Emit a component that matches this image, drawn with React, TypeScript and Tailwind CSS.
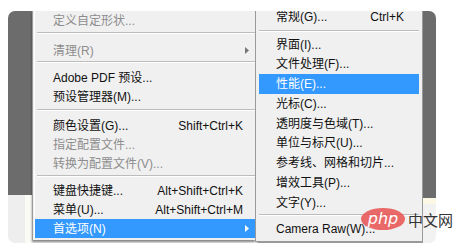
import React from "react";

const FONT = { fontFamily: '"Liberation Sans", "Noto Sans CJK SC", sans-serif' };

function Arrow({ color }: { color: string }) {
  return (
    <svg width="4" height="7" viewBox="0 0 4 7" className="shrink-0">
      <polygon points="0,0 4,3.5 0,7" fill={color} />
    </svg>
  );
}

function LRow({
  label,
  shortcut,
  disabled,
  active,
  arrow,
}: {
  label: string;
  shortcut?: string;
  disabled?: boolean;
  active?: boolean;
  arrow?: boolean;
}) {
  const color = active ? "text-white" : disabled ? "text-[#8d8d8d]" : "text-[#111]";
  return (
    <div
      className={`flex h-[19px] items-center pl-[18px] pr-[12px] text-[12px] leading-none ${color} ${
        active ? "bg-[#3399ff]" : ""
      }`}
    >
      <span className="flex-1 whitespace-nowrap">{label}</span>
      {shortcut && <span className="whitespace-nowrap">{shortcut}</span>}
      {arrow && (
        <span className="mr-[-6px]">
          <Arrow color={active ? "#ffffff" : "#777777"} />
        </span>
      )}
    </div>
  );
}

function RRow({ label, shortcut, active }: { label: string; shortcut?: string; active?: boolean }) {
  return (
    <div
      className={`mx-[3px] flex h-[19.75px] items-center pl-[17px] pr-[15px] text-[12px] leading-none ${
        active ? "bg-[#3399ff] text-white" : "text-[#111]"
      }`}
    >
      <span className="flex-1 whitespace-nowrap">{label}</span>
      {shortcut && <span className="whitespace-nowrap">{shortcut}</span>}
    </div>
  );
}

function Sep({ h, top, inset }: { h: string; top: string; inset: string }) {
  return (
    <div className={`${h} ${inset}`}>
      <div className={`${top} h-px bg-[#bcbcbc]`} />
      <div className="h-px bg-white" />
    </div>
  );
}

export default function App() {
  return (
    <div className="relative h-[251px] w-[460px] overflow-hidden bg-white" style={FONT}>
      <div className="pl-[8px] pt-[11px]">
        <div className="flex h-[232px] w-[428px] overflow-hidden rounded-[7px]">
          {/* left app strip */}
          <div className="flex w-[24px] flex-col">
            <div className="h-[184px] bg-[#6c6c6c]" />
            <div className="flex flex-1">
              <div className="flex-1 bg-[#eeeeee]" />
              <div className="w-[7px] bg-[#fbfbf6]" />
            </div>
          </div>

          {/* left menu */}
          <div className="flex w-[223px] flex-col bg-[#f4f4f4]">
            <div className="flex h-[229px] flex-col border-l border-[#9a9a9a] bg-[#f0f0f0] pl-[1px] shadow-[0_2px_2px_rgba(0,0,0,0.45)]">
              <div className="flex flex-1 flex-col border-l border-white">
                <LRow label="定义自定形状..." disabled />
                <Sep h="h-[11px]" top="mt-[2px]" inset="ml-[2px]" />
                <LRow label="清理(R)" disabled arrow />
                <Sep h="h-[8px]" top="mt-[1px]" inset="ml-[2px]" />
                <LRow label="Adobe PDF 预设..." />
                <LRow label="预设管理器(M)..." />
                <Sep h="h-[10px]" top="mt-[3px]" inset="ml-[2px]" />
                <LRow label="颜色设置(G)..." shortcut="Shift+Ctrl+K" />
                <LRow label="指定配置文件..." disabled />
                <LRow label="转换为配置文件(V)..." disabled />
                <Sep h="h-[8px]" top="mt-[2px]" inset="ml-[2px]" />
                <LRow label="键盘快捷键..." shortcut="Alt+Shift+Ctrl+K" />
                <LRow label="菜单(U)..." shortcut="Alt+Shift+Ctrl+M" />
                <LRow label="首选项(N)" active arrow />
              </div>
            </div>
          </div>

          {/* submenu */}
          <div className="flex w-[168px] flex-col bg-[#f4f4f4]">
            <div className="h-[231px] overflow-hidden border-l border-r border-b border-[#9a9a9a] bg-[#f0f0f0] shadow-[2px_2px_2px_rgba(0,0,0,0.4)]">
              <div className="-mt-[4px] flex flex-col">
                <RRow label="常规(G)..." shortcut="Ctrl+K" />
                <Sep h="h-[8px]" top="mt-[3px]" inset="mx-[3px]" />
                <RRow label="界面(I)..." />
                <RRow label="文件处理(F)..." />
                <RRow label="性能(E)..." active />
                <RRow label="光标(C)..." />
                <RRow label="透明度与色域(T)..." />
                <RRow label="单位与标尺(U)..." />
                <RRow label="参考线、网格和切片..." />
                <RRow label="增效工具(P)..." />
                <RRow label="文字(Y)..." />
                <Sep h="h-[6.5px]" top="mt-[1.5px]" inset="mx-[3px]" />
                <RRow label="Camera Raw(W)..." />
              </div>
            </div>
          </div>

          {/* right app strip */}
          <div className="flex w-[13px] flex-col">
            <div className="h-[187px] bg-[#6c6c6c]" />
            <div className="h-[6px] bg-[#fbf8e6]" />
            <div className="flex-1 bg-[#f2f2f2]" />
          </div>
        </div>
      </div>

      {/* php watermark */}
      <div className="absolute left-[361px] top-[208px] flex items-center">
        <div className="flex h-[22px] w-[44px] items-center justify-center rounded-[50%] bg-[rgba(232,80,80,0.85)]">
          <span
            className="text-[16px] italic leading-none text-white"
            style={{ fontFamily: '"DejaVu Sans", sans-serif' }}
          >
            php
          </span>
        </div>
        <span
          className="ml-[3px] text-[15px] leading-none text-[#333]"
          style={{ fontFamily: '"Noto Sans CJK SC", sans-serif' }}
        >
          中文网
        </span>
      </div>
    </div>
  );
}
